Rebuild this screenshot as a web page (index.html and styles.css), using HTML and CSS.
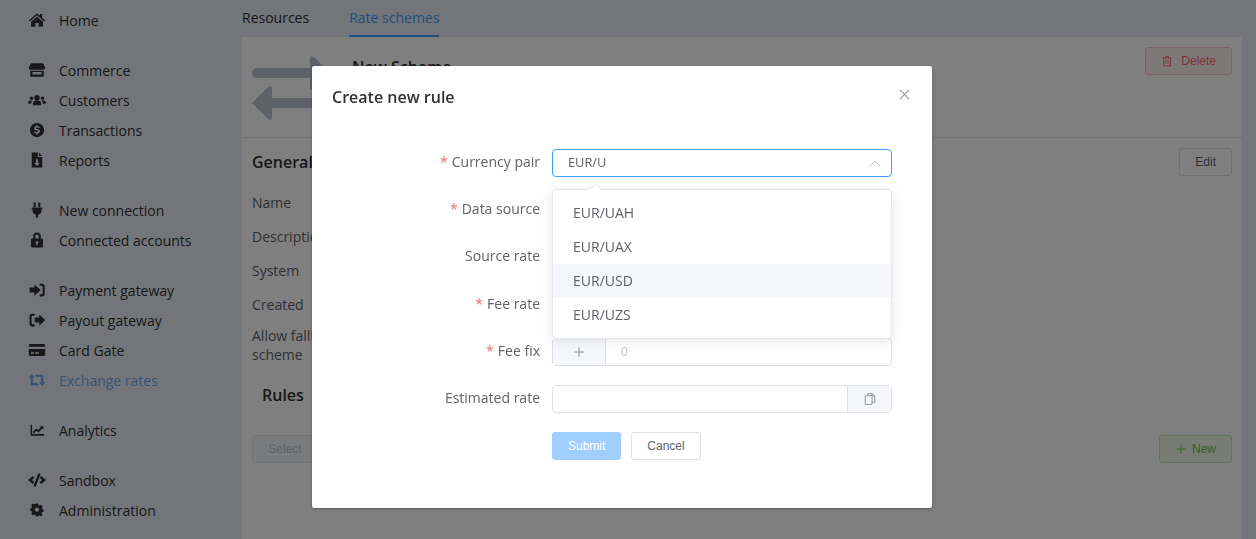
FILE: index.html
```html
<!DOCTYPE html>
<html lang="en">
<head>
    <meta charset="UTF-8">
    <meta name="viewport" content="width=device-width, initial-scale=1.0">
    <title>Rate schemes</title>
    <link rel="stylesheet" href="styles.css">
</head>
<body>
    <div class="layout">
        <nav class="sidebar">
            <ul class="nav-group">
                <li class="nav-item"><svg class="nav-icon" viewBox="0 0 24 24"><path d="M12 3 1 12.500l1.300 1.500L12 5.700l9.700 8.300 1.300-1.500L19 9V4h-3v2.400zM12 7.500 4 14.300V21h5.800v-5h4.400v5H20v-6.700z"/></svg>Home</li>
            </ul>
            <ul class="nav-group">
                <li class="nav-item"><svg class="nav-icon" viewBox="0 0 24 24"><path d="M4 3h16l3 5.500c0 2-1.500 3.300-3 3.300H4C2.500 11.800 1 10.500 1 8.500zM3 13h18v8H3zm3 1.500V18h12v-3.500z"/></svg>Commerce</li>
                <li class="nav-item"><svg class="nav-icon" viewBox="0 0 24 24"><circle cx="12" cy="9" r="3.600"/><circle cx="4.700" cy="9.500" r="2.300"/><circle cx="19.300" cy="9.500" r="2.300"/><path d="M6.500 19v-2c0-2.500 2-4.200 4-4.200h3c2 0 4 1.700 4 4.200v2zM0 16.500c0-2.500 1.500-4 3-4h3c-1 1-1.800 2.500-1.800 4.500zM24 16.500c0-2.500-1.500-4-3-4h-3c1 1 1.800 2.500 1.800 4.500z"/></svg>Customers</li>
                <li class="nav-item"><svg class="nav-icon" viewBox="0 0 24 24"><circle cx="12" cy="12" r="9.500"/><path fill="#e6ebf5" d="M11 5.500h2v1.400c1.200.1 2.200.6 2.900 1.300l-1.300 1.300c-.6-.5-1.500-.9-2.500-.9-1 0-1.600.4-1.600 1 0 .7.800.9 2 1.200 1.800.4 3.500 1 3.500 3 0 1.600-1.200 2.600-3 2.900v1.300h-2v-1.300c-1.400-.2-2.500-.7-3.300-1.500l1.300-1.400c.7.700 1.700 1.100 2.800 1.100 1.100 0 1.800-.4 1.800-1.100s-.8-1-2.100-1.300c-1.700-.4-3.400-1-3.400-2.900 0-1.500 1.200-2.600 2.900-2.900z"/></svg>Transactions</li>
                <li class="nav-item"><svg class="nav-icon" viewBox="0 0 24 24"><path fill-rule="evenodd" d="M5 2h8v6h6v14H5zm9.500 0L19 6.500h-4.500zM10.500 11v5H8l4 4 4-4h-2.500v-5z"/></svg>Reports</li>
            </ul>
            <ul class="nav-group">
                <li class="nav-item"><svg class="nav-icon" viewBox="0 0 24 24"><path d="M7.500 2h2.800v6H7.500zm6.200 0h2.800v6h-2.800zM5 8.500h14V11h-1v2c0 2.800-2 4.800-4.500 5.300V22h-3v-3.700C8 17.800 6 15.800 6 13v-2H5z"/></svg>New connection</li>
                <li class="nav-item"><svg class="nav-icon" viewBox="0 0 24 24"><path fill-rule="evenodd" d="M7 10V7a5 5 0 0 1 10 0v3h1.500c.8 0 1.500.7 1.500 1.500v9c0 .8-.7 1.500-1.500 1.500h-13c-.8 0-1.500-.7-1.500-1.500v-9c0-.8.700-1.500 1.500-1.500zm2.700 0h4.600V7a2.300 2.300 0 0 0-4.600 0zM12 13.500a1.800 1.800 0 0 0-1 3.300V19h2v-2.200a1.800 1.800 0 0 0-1-3.300z"/></svg>Connected accounts</li>
            </ul>
            <ul class="nav-group">
                <li class="nav-item"><svg class="nav-icon" viewBox="0 0 24 24"><path d="M2 8.800h6.500V4.500L17 12l-8.500 7.500v-4.300H2zM15.500 3.500H19c1.900 0 3.300 1.400 3.300 3.300v10.400c0 1.900-1.400 3.300-3.300 3.300h-3.500v-2.800h3c.6 0 1-.4 1-1V7.300c0-.6-.4-1-1-1h-3z"/></svg>Payment gateway</li>
                <li class="nav-item"><svg class="nav-icon" viewBox="0 0 24 24"><path d="M9 8.800h6V4.500l8 7.500-8 7.500v-4.300H9zM9 3.500H5.300C3.400 3.500 2 4.900 2 6.800v10.400c0 1.900 1.400 3.300 3.300 3.300H9v-2.800H5.800c-.6 0-1-.4-1-1V7.300c0-.6.400-1 1-1H9z"/></svg>Payout gateway</li>
                <li class="nav-item"><svg class="nav-icon" viewBox="0 0 24 24"><path fill-rule="evenodd" d="M1 6c0-1 .8-2 2-2h18c1.200 0 2 1 2 2v1.500H1zm0 4.500h22V18c0 1-.8 2-2 2H3c-1.200 0-2-1-2-2zM4 15v2h4v-2zm5.500 0v2h5v-2z"/></svg>Card Gate</li>
                <li class="nav-item active"><svg class="nav-icon" viewBox="0 0 24 24"><path d="M5 4 .5 9h3v8c0 1.100.9 2 2 2H15l-2.500-3H6.500V9h3zM19 20l4.500-5h-3V7c0-1.100-.9-2-2-2H9l2.500 3h6v7h-3z"/></svg>Exchange rates</li>
            </ul>
            <ul class="nav-group">
                <li class="nav-item"><svg class="nav-icon" viewBox="-2 -2 28 28"><path d="M2 4h2.400v14.300H23V21H2zM6 14.500l5-5 3 2.500 4-4.500-2-1.500h6v5.500l-1.800-1.800-6 6.300-3.200-2.700-3.500 3.500H6z"/></svg>Analytics</li>
            </ul>
            <ul class="nav-group">
                <li class="nav-item"><svg class="nav-icon" viewBox="0 0 24 24"><path d="M13.800 3l3 .9-6.600 17.100-3-.9zM6.500 6.800 8.500 9 5.300 12l3.200 3-2 2.200L0 12zM17.500 6.800l-2 2.200 3.200 3-3.200 3 2 2.200L24 12z"/></svg>Sandbox</li>
                <li class="nav-item"><svg class="nav-icon" viewBox="-3 -3 30 30"><path fill-rule="evenodd" d="M10 1h4l.6 2.800 1.800.8 2.500-1.500 2.700 3-1.700 2.400.6 1.900 2.500.7v4l-2.600.7-.7 1.800 1.500 2.400-2.800 2.800-2.400-1.500-1.800.7L14 23h-4l-.6-2.800-1.800-.7-2.400 1.500-2.800-2.800 1.500-2.400-.7-1.800L.6 13.200v-4l2.500-.7.6-1.900L2 4.100l2.700-3 2.500 1.500 1.800-.8zM12 8a3.500 3.500 0 1 0 0 7 3.500 3.500 0 0 0 0-7z"/></svg>Administration</li>
            </ul>
        </nav>

        <main class="content">
            <div class="tabs">
                <span class="tab">Resources</span>
                <span class="tab tab-active">Rate schemes</span>
            </div>
            <section class="card">
                <div class="card-top">
                    <svg class="scheme-icon" width="80" height="66" viewBox="0 0 80 66"><rect x="0" y="12" width="70" height="10" rx="5"/><path d="M58 2c0-2 2.500-2.500 4-1l16 16-16 16c-1.500 1.500-4 1-4-1z"/><rect x="8" y="42" width="72" height="10" rx="1"/><path d="M20 32c0-2-2.500-2.500-4-1L0 47l16 16c1.500 1.500 4 1 4-1z"/></svg>
                    <h2 class="scheme-title">New Scheme</h2>
                    <button class="btn btn-danger"><svg class="btn-icon" viewBox="0 0 16 16"><path d="M2 4h12M6 4V2h4v2M3.500 4v10.500h9V4M6.500 6.500v5.500M9.500 6.500v5.500" fill="none" stroke="currentColor" stroke-width="1.200"/></svg>Delete</button>
                </div>
                <div class="card-body">
                    <div class="general-head">
                        <h3 class="section-title">General</h3>
                        <button class="btn">Edit</button>
                    </div>
                    <dl class="details">
                        <dt>Name</dt>
                        <dt>Description</dt>
                        <dt>System</dt>
                        <dt>Created</dt>
                        <dt class="details-wrap">Allow fallback scheme</dt>
                    </dl>
                    <h3 class="section-title rules-title">Rules</h3>
                    <div class="rules-bar">
                        <button class="btn btn-muted">Select</button>
                        <button class="btn btn-new"><svg class="btn-icon" viewBox="0 0 16 16"><path d="M8 2v12M2 8h12" fill="none" stroke="currentColor" stroke-width="1.200"/></svg>New</button>
                    </div>
                </div>
            </section>
        </main>
    </div>

    <div class="overlay">
        <div class="modal">
            <div class="modal-head">
                <span class="modal-title">Create new rule</span>
                <svg class="modal-close" viewBox="0 0 12 12"><path d="M1 1l10 10M11 1 1 11" fill="none" stroke="#909399" stroke-width="1.100"/></svg>
            </div>
            <form class="rule-form">
                <div class="form-row">
                    <label class="form-label"><span class="req">*</span>Currency pair</label>
                    <div class="select-wrap">
                        <div class="input input-focus">
                            <span>EUR/U</span>
                            <svg class="select-arrow" viewBox="0 0 12 7"><path d="M.7 6.300 6 1l5.300 5.300" fill="none" stroke="#c0c4cc" stroke-width="1"/></svg>
                        </div>
                        <div class="dropdown">
                            <span class="dropdown-caret"></span>
                            <div class="dropdown-item">EUR/UAH</div>
                            <div class="dropdown-item">EUR/UAX</div>
                            <div class="dropdown-item dropdown-hover">EUR/USD</div>
                            <div class="dropdown-item">EUR/UZS</div>
                        </div>
                    </div>
                </div>
                <div class="form-row">
                    <label class="form-label"><span class="req">*</span>Data source</label>
                    <div class="input"></div>
                </div>
                <div class="form-row">
                    <label class="form-label">Source rate</label>
                    <div class="input"></div>
                </div>
                <div class="form-row">
                    <label class="form-label"><span class="req">*</span>Fee rate</label>
                    <div class="input"></div>
                </div>
                <div class="form-row">
                    <label class="form-label"><span class="req">*</span>Fee fix</label>
                    <div class="input-group">
                        <span class="addon addon-left"><svg class="addon-icon" viewBox="0 0 12 12"><path d="M6 1v10M1 6h10" fill="none" stroke="#909399" stroke-width="1"/></svg></span>
                        <span class="group-input placeholder">0</span>
                    </div>
                </div>
                <div class="form-row">
                    <label class="form-label">Estimated rate</label>
                    <div class="input-group">
                        <span class="group-input"></span>
                        <span class="addon addon-right"><svg class="addon-icon" viewBox="0 0 12 12"><path d="M4 2.500V.6h4.200L10.800 3v6.300H8M8 .6V3h2.800M1.200 2.700H8v8.700H1.200z" fill="none" stroke="#909399" stroke-width="1"/></svg></span>
                    </div>
                </div>
                <div class="form-actions">
                    <button type="button" class="btn-submit">Submit</button>
                    <button type="button" class="btn-cancel">Cancel</button>
                </div>
            </form>
        </div>
    </div>
</body>
</html>
```

FILE: styles.css
```css
* {
    margin: 0;
    padding: 0;
    box-sizing: border-box;
}

html, body {
    height: 100%;
    overflow: hidden;
}

body {
    background: #e6ebf5;
    color: #303133;
    font-family: 'Open Sans', 'Noto Sans', sans-serif;
    font-size: 14px;
}

.layout {
    display: flex;
    height: 100vh;
}

/* sidebar */
.sidebar {
    width: 242px;
    flex-shrink: 0;
    padding-top: 5px;
}

.nav-group {
    list-style: none;
    margin-bottom: 20px;
}

.nav-item {
    display: flex;
    align-items: center;
    height: 30px;
    padding-left: 28px;
    color: #303133;
}

.nav-icon {
    width: 18px;
    height: 18px;
    margin-right: 13px;
    flex-shrink: 0;
    fill: #303133;
}

.nav-item.active {
    color: #6ea8ea;
}

.nav-item.active .nav-icon {
    fill: #6ea8ea;
}

/* main */
.content {
    flex: 1;
    padding-right: 14px;
    min-width: 0;
}

.tabs {
    display: flex;
    gap: 40px;
    height: 37px;
}

.tab {
    height: 37px;
    line-height: 36px;
    color: #303133;
}

.tab-active {
    color: #409eff;
    border-bottom: 2px solid #409eff;
}

.card {
    background: #fff;
    height: 502px;
}

.card-top {
    display: flex;
    align-items: flex-start;
    height: 101px;
    padding: 10px 10px 0;
    border-bottom: 1px solid #e4e7ed;
}

.scheme-icon {
    fill: #bcc4d0;
    margin-top: 9px;
    flex-shrink: 0;
}

.scheme-title {
    flex: 1;
    margin: 9px 0 0 20px;
    font-size: 16px;
    font-weight: 600;
}

.card-body {
    padding: 10px 10px 0;
}

.general-head {
    display: flex;
    justify-content: space-between;
    align-items: center;
    height: 28px;
}

.section-title {
    font-size: 16px;
    font-weight: 600;
    color: #303133;
}

.details {
    margin-top: 10px;
    color: #606266;
}

.details dt {
    height: 34px;
    line-height: 34px;
}

.details .details-wrap {
    width: 100px;
    height: auto;
    line-height: 19px;
    margin-top: 4px;
}

.rules-title {
    margin: 20px 0 0 10px;
}

.rules-bar {
    display: flex;
    justify-content: space-between;
    margin-top: 29px;
}

.btn {
    display: inline-flex;
    align-items: center;
    justify-content: center;
    height: 28px;
    padding: 0 15px;
    background: #fff;
    border: 1px solid #dcdfe6;
    border-radius: 3px;
    color: #606266;
    font-family: 'Liberation Sans', Arial, sans-serif;
    font-size: 12px;
}

.btn-icon {
    width: 12px;
    height: 12px;
    margin-right: 8px;
}

.btn-danger {
    background: #fef0f0;
    border-color: #fbc4c4;
    color: #f56c6c;
}

.btn-new {
    background: #f0f9eb;
    border-color: #c2e7b0;
    color: #67c23a;
}

.btn-new .btn-icon {
    margin-right: 5px;
}

.btn-muted {
    width: 66px;
    color: #c0c4cc;
    background: #f5f7fa;
    border-color: #e4e7ed;
}

/* modal */
.overlay {
    position: fixed;
    top: 0;
    left: 0;
    width: 100%;
    height: 100%;
    padding-right: 12px;
    background: rgba(0, 0, 0, 0.5);
}

.modal {
    width: 620px;
    height: 442px;
    margin: 66px auto 0;
    padding: 0 40px 0 20px;
    background: #fff;
    border-radius: 2px;
    box-shadow: 0 1px 3px rgba(0, 0, 0, 0.3);
}

.modal-head {
    display: flex;
    justify-content: space-between;
    align-items: center;
    height: 62px;
    margin-right: -18px;
}

.modal-title {
    color: #303133;
    font-size: 16px;
    font-weight: 600;
}

.modal-close {
    width: 11px;
    height: 11px;
    margin-top: -6px;
}

.rule-form {
    padding-top: 21px;
}

.form-row {
    display: flex;
    height: 28px;
    margin-bottom: 19.2px;
}

.form-label {
    width: 220px;
    padding-right: 12px;
    line-height: 26px;
    text-align: right;
    color: #606266;
    flex-shrink: 0;
}

.req {
    margin-right: 4px;
    color: #f56c6c;
}

.select-wrap {
    position: relative;
    flex: 1;
}

.input {
    flex: 1;
    display: flex;
    align-items: center;
    justify-content: space-between;
    height: 28px;
    padding: 0 15px 2px;
    border: 1px solid #dcdfe6;
    border-radius: 4px;
    color: #606266;
    font-size: 12.8px;
}

.input-focus {
    border-color: #409eff;
}

.select-arrow {
    width: 12px;
    height: 7px;
    margin-right: -5px;
    margin-top: 3px;
}

.dropdown {
    position: absolute;
    top: 40px;
    left: 0;
    right: 0;
    padding: 6px 0;
    background: #fff;
    border: 1px solid #e4e7ed;
    border-radius: 4px;
    box-shadow: 0 2px 12px rgba(0, 0, 0, 0.1);
    z-index: 2;
}

.dropdown-caret {
    position: absolute;
    top: -5px;
    left: 38px;
    width: 9px;
    height: 9px;
    background: #fff;
    border-top: 1px solid #e4e7ed;
    border-left: 1px solid #e4e7ed;
    transform: rotate(45deg);
}

.dropdown-item {
    height: 34px;
    line-height: 34px;
    padding-left: 20px;
    color: #606266;
}

.dropdown-hover {
    background: #f5f7fa;
}

.input-group {
    flex: 1;
    display: flex;
    height: 28px;
    border: 1px solid #dcdfe6;
    border-radius: 4px;
    font-size: 12px;
}

.addon {
    display: flex;
    align-items: center;
    justify-content: center;
    background: #f5f7fa;
}

.addon-left {
    width: 53px;
    border-right: 1px solid #dcdfe6;
}

.addon-right {
    width: 44px;
    border-left: 1px solid #dcdfe6;
}

.addon-icon {
    width: 12px;
    height: 12px;
}

.group-input {
    flex: 1;
    padding-left: 15px;
    line-height: 26px;
}

.placeholder {
    color: #c0c4cc;
}

.form-actions {
    display: flex;
    gap: 10px;
    margin-left: 220px;
}

.btn-submit, .btn-cancel {
    height: 28px;
    padding: 0 15px;
    border-radius: 3px;
    font-family: 'Liberation Sans', Arial, sans-serif;
    font-size: 12px;
}

.btn-submit {
    background: #a0cfff;
    border: 1px solid #a0cfff;
    color: #fff;
}

.btn-cancel {
    background: #fff;
    border: 1px solid #dcdfe6;
    color: #606266;
}
```
